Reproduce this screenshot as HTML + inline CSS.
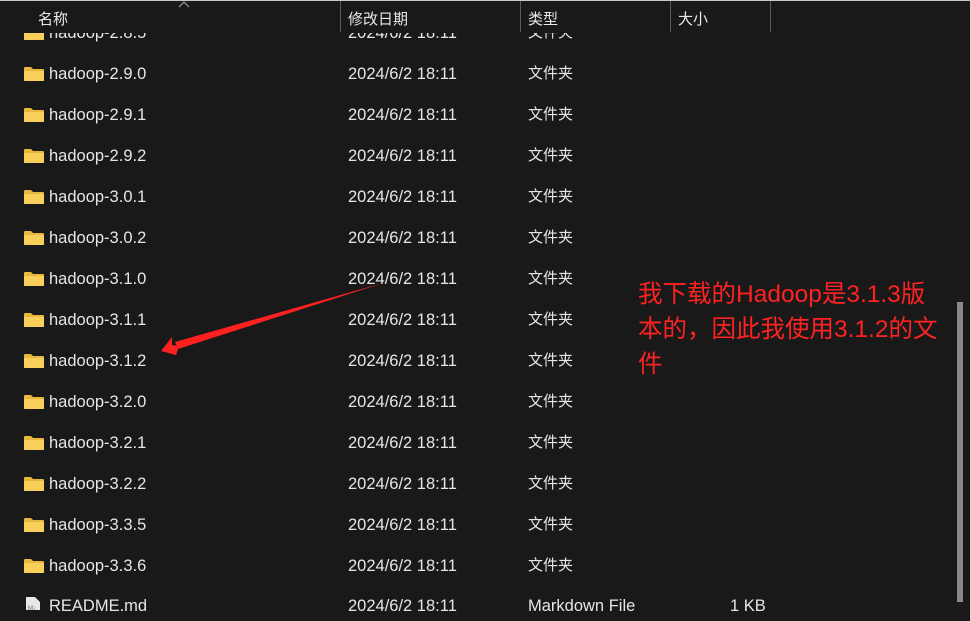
<!DOCTYPE html>
<html><head><meta charset="utf-8"><style>
html,body{margin:0;padding:0;}
body{width:970px;height:621px;background:#191919;position:relative;overflow:hidden;font-family:"Liberation Sans","Noto Sans CJK SC",sans-serif;color:#e6e6e6;font-size:16.5px;}
.top{position:absolute;left:0;top:0;width:970px;height:1px;background:#c8c8c8;}
.hdr{position:absolute;top:0;height:33px;background:#191919;width:970px;z-index:2;}
.h{position:absolute;top:8px;font-size:15px;color:#e8e8e8;}
.div{position:absolute;top:1px;width:1px;height:31px;background:#5a5a5a;}
.row{position:absolute;left:0;width:900px;height:20px;}
.row span{position:absolute;top:0;white-space:nowrap;line-height:20px;}
.row span.c{font-size:15px;}
.fold{position:absolute;left:24px;top:3px;width:20px;height:14px;}
.red{position:absolute;left:638px;color:#ff2222;font-size:24.5px;line-height:35px;top:277px;width:330px;}
</style></head><body>
<div class="top"></div>
<div class="hdr">
<div class="top"></div>
<span class="h" style="left:38px">名称</span>
<svg style="position:absolute;left:178px;top:1px" width="12" height="7"><path d="M1 6 L6 1 L11 6" stroke="#aaa" fill="none" stroke-width="1"/></svg>
<div class="div" style="left:340px"></div>
<span class="h" style="left:348px">修改日期</span>
<div class="div" style="left:520px"></div>
<span class="h" style="left:528px">类型</span>
<div class="div" style="left:670px"></div>
<span class="h" style="left:678px">大小</span>
<div class="div" style="left:770px"></div>
</div>
<div id="rows"></div>
<div class="row" style="top:596px">
<svg class="fold" style="left:25px;top:0" width="16" height="20"><path d="M1 1 H10 L15 6 V19 H1 Z" fill="#e8e8e8"/><text x="3" y="14" font-size="6" fill="#666" font-family="Liberation Sans">M↓</text></svg>
<span style="left:49px">README.md</span><span style="left:348px">2024/6/2 18:11</span><span style="left:528px">Markdown File</span><span style="left:730px">1 KB</span>
</div>
<div class="red">我下载的Hadoop是3.1.3版<br>本的，因此我使用3.1.2的文<br>件</div>
<div style="position:absolute;left:957px;top:302px;width:6px;height:300px;background:#8a8a8a;"></div>
<svg style="position:absolute;left:0;top:0" width="970" height="621">
<path d="M383 283 L175 342 L178 349 Z" fill="#ff2020"/>
<path d="M161 351 L172 337 L172 345 L179 346 L176 355 Z" fill="#ff2020"/>
</svg>
<script>
var names=["2.8.5","2.9.0","2.9.1","2.9.2","3.0.1","3.0.2","3.1.0","3.1.1","3.1.2","3.2.0","3.2.1","3.2.2","3.3.5","3.3.6"];
var h="";
for(var i=0;i<names.length;i++){var t=23+41*i;
h+='<div class="row" style="top:'+t+'px"><svg class="fold" width="20" height="14"><path d="M0 1 Q0 0 1 0 H7 L9 2 H19 Q20 2 20 3 V13 Q20 14 19 14 H1 Q0 14 0 13 Z" fill="#e9b73d"/><path d="M0 4 H20 V13 Q20 14 19 14 H1 Q0 14 0 13 Z" fill="#f7cf5a"/></svg><span style="left:49px">hadoop-'+names[i]+'</span><span style="left:348px">2024/6/2 18:11</span><span class="c" style="left:528px">文件夹</span></div>';}
document.getElementById("rows").innerHTML=h;
</script>
</body></html>
